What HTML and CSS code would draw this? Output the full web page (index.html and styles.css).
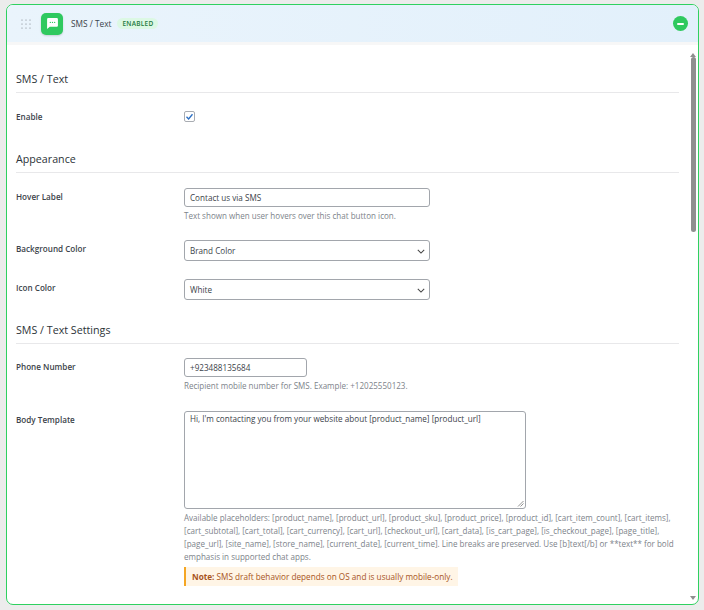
FILE: index.html
```html
<!DOCTYPE html>
<html lang="en">
<head>
<meta charset="utf-8">
<title>SMS / Text</title>
<link rel="stylesheet" href="styles.css">
</head>
<body>
<div class="card">
  <header class="head">
    <svg class="grip" viewBox="0 0 10 10" width="10" height="10"><g fill="#777c84"><circle cx="1" cy="1" r=".6"/><circle cx="5" cy="1" r=".6"/><circle cx="9" cy="1" r=".6"/><circle cx="1" cy="5" r=".6"/><circle cx="5" cy="5" r=".6"/><circle cx="9" cy="5" r=".6"/><circle cx="1" cy="9" r=".6"/><circle cx="5" cy="9" r=".6"/><circle cx="9" cy="9" r=".6"/></g></svg>
    <span class="app-icon"><svg viewBox="0 0 24 24" width="13" height="13"><path fill="#fff" d="M4 2h16a2 2 0 0 1 2 2v12a2 2 0 0 1-2 2H7l-5 4V4a2 2 0 0 1 2-2z"/><g fill="#2fc95f"><circle cx="8" cy="10" r="1.2"/><circle cx="12" cy="10" r="1.2"/><circle cx="16" cy="10" r="1.2"/></g></svg></span>
    <span class="head-title">SMS / Text</span>
    <span class="badge">ENABLED</span>
    <span class="collapse"><span class="minus"></span></span>
  </header>
  <main class="body">
    <h2 class="sec first">SMS / Text</h2>
    <div class="row row-check">
      <label class="lab">Enable</label>
      <div class="fld"><span class="check"><svg viewBox="0 0 12 12" width="9" height="9"><path d="M2 6.4 4.8 9.2 10 3" fill="none" stroke="#2b6fc4" stroke-width="1.8"/></svg></span></div>
    </div>
    <h2 class="sec second">Appearance</h2>
    <div class="row">
      <label class="lab">Hover Label</label>
      <div class="fld">
        <div class="ctl w-l">Contact us via SMS</div>
        <p class="help">Text shown when user hovers over this chat button icon.</p>
      </div>
    </div>
    <div class="row row-sel">
      <label class="lab">Background Color</label>
      <div class="fld"><div class="ctl sel w-l">Brand Color<svg class="chev" viewBox="0 0 10 6" width="8" height="5"><path d="M1 1l4 4 4-4" fill="none" stroke="#444" stroke-width="1.3"/></svg></div></div>
    </div>
    <div class="row row-sel">
      <label class="lab">Icon Color</label>
      <div class="fld"><div class="ctl sel w-l">White<svg class="chev" viewBox="0 0 10 6" width="8" height="5"><path d="M1 1l4 4 4-4" fill="none" stroke="#444" stroke-width="1.3"/></svg></div></div>
    </div>
    <h2 class="sec third">SMS / Text Settings</h2>
    <div class="row row-phone">
      <label class="lab">Phone Number</label>
      <div class="fld">
        <div class="ctl w-s">+923488135684</div>
        <p class="help">Recipient mobile number for SMS. Example: +12025550123.</p>
      </div>
    </div>
    <div class="row row-body">
      <label class="lab">Body Template</label>
      <div class="fld">
        <div class="area">Hi, I'm contacting you from your website about [product_name] [product_url]
          <svg class="grab" viewBox="0 0 7 7" width="7" height="7"><path d="M1 6.5 6.5 1M3.5 6.5l3-3" stroke="#777" stroke-width=".8"/></svg>
        </div>
        <p class="help help-wide">Available placeholders: [product_name], [product_url], [product_sku], [product_price], [product_id], [cart_item_count], [cart_items], [cart_subtotal], [cart_total], [cart_currency], [cart_url], [checkout_url], [cart_data], [is_cart_page], [is_checkout_page], [page_title], [page_url], [site_name], [store_name], [current_date], [current_time]. Line breaks are preserved. Use [b]text[/b] or **text** for bold emphasis in supported chat apps.</p>
        <p class="note"><b>Note:</b> SMS draft behavior depends on OS and is usually mobile-only.</p>
      </div>
    </div>
  </main>
  <div class="scrollbar">
    <span class="arrow up"></span>
    <span class="thumb"></span>
    <span class="arrow down"></span>
  </div>
</div>
</body>
</html>
```
FILE: styles.css
```css
* { box-sizing: border-box; }
html, body { height: 100%; }
body {
  margin: 0;
  padding: 4px 5px 5px 6px;
  background: #ececec;
  font-family: "Open Sans", "Noto Sans", sans-serif;
  font-size: 8.15px;
  color: #3c434a;
  overflow: hidden;
}
.card {
  position: relative;
  height: 601px;
  background: #fff;
  border: 1.5px solid #2fd160;
  border-radius: 7px;
  overflow: hidden;
}
.head {
  display: flex;
  align-items: center;
  height: 37px;
  padding: 0 10px 0 13.5px;
  background: linear-gradient(90deg, #eaf4fc, #e2f0fb);
  color: #3c434a;
}
.grip { margin-right: 10.5px; }
.app-icon {
  display: flex;
  align-items: center;
  justify-content: center;
  width: 22px;
  height: 22px;
  margin-right: 8px;
  background: #2fc95f;
  border-radius: 5px;
  box-shadow: 0 1px 2px rgba(0,0,0,.15);
}
.head-title { font-size: 8.3px; font-weight: 500; margin-right: 6px; }
.badge {
  padding: 1px 5px;
  background: #dcf8e4;
  color: #1c7a40;
  border-radius: 7px;
  font-size: 6.5px;
  font-weight: 600;
  letter-spacing: .25px;
}
.collapse {
  display: flex;
  align-items: center;
  justify-content: center;
  width: 15px;
  height: 15px;
  margin-left: auto;
  background: #2fc95f;
  border-radius: 50%;
}
.minus { width: 7px; height: 2px; background: #fff; border-radius: 1px; }
.body { padding: 0 19px 0 9px; border-top: 3px solid #f7f7f7; }
.sec {
  margin: 28px 0 0;
  padding-top: 1px;
  height: 22px;
  font-size: 10.7px;
  line-height: 15px;
  font-weight: 500;
  color: #2c3338;
  border-bottom: 1px solid #e8e8ea;
}
.sec.first { margin-top: 26px; }
.sec.third { margin-top: 22px; }
.row { display: flex; margin-top: 15px; }
.row-phone { margin-top: 14px; }
.row-sel { margin-top: 18px; }
.row-body { margin-top: 18.5px; }
.lab {
  width: 168px;
  flex: none;
  padding-top: 2px;
  font-size: 8.15px;
  line-height: 13px;
  font-weight: 600;
  color: #3c434a;
}
.fld { flex: 1; min-width: 0; }
.check {
  display: flex;
  align-items: center;
  justify-content: center;
  width: 11px;
  height: 11px;
  border: 1px solid #a8acb2;
  border-radius: 2px;
  background: #fff;
  margin-top: 3px;
}
.ctl {
  position: relative;
  height: 19px;
  padding: 0 5px;
  line-height: 17px;
  background: #fff;
  border: 1px solid #a2a6ac;
  border-radius: 3px;
  font-size: 8.15px;
  color: #3c434a;
}
.sel { height: 21px; line-height: 20px; }
.w-l { width: 246px; }
.w-s { width: 123px; }
.chev { position: absolute; right: 4px; top: 8px; }
.help { margin: 2px 0 0; font-size: 8.06px; line-height: 13px; color: #7d838a; }
.area {
  position: relative;
  width: 342px;
  height: 98px;
  padding: 0 5px;
  border: 1px solid #a2a6ac;
  border-radius: 3px;
  font-size: 8.15px;
  line-height: 13px;
  color: #3c434a;
}
.grab { position: absolute; right: 1px; bottom: 1px; }
.help-wide { margin-top: 2.5px; }
.note {
  display: inline-block;
  margin: 3.5px 0 0;
  padding: 3px 5px 3px 6px;
  line-height: 13px;
  font-size: 8.2px;
  color: #a8541c;
  background: #fff5e6;
  border-left: 2px solid #f5a623;
}
.scrollbar {
  position: absolute;
  top: 46px;
  right: 1px;
  bottom: 2px;
  width: 7px;
}
.thumb {
  position: absolute;
  top: 6px;
  left: 1px;
  width: 5px;
  height: 175px;
  background: #8f8f8f;
  border-radius: 3px;
}
.arrow { position: absolute; left: 0; width: 0; height: 0; border-left: 3.5px solid transparent; border-right: 3.5px solid transparent; }
.up { top: 2px; border-bottom: 4px solid #8f8f8f; }
.down { bottom: 2px; border-top: 4px solid #8f8f8f; }
```
